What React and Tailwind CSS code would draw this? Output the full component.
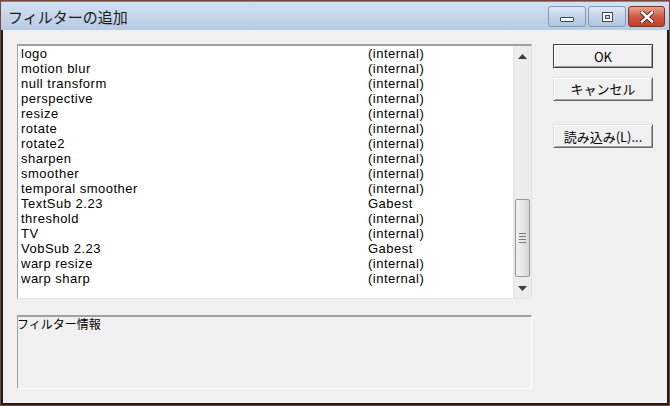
import { useState } from 'react';

const filters = [
  ['logo', '(internal)'],
  ['motion blur', '(internal)'],
  ['null transform', '(internal)'],
  ['perspective', '(internal)'],
  ['resize', '(internal)'],
  ['rotate', '(internal)'],
  ['rotate2', '(internal)'],
  ['sharpen', '(internal)'],
  ['smoother', '(internal)'],
  ['temporal smoother', '(internal)'],
  ['TextSub 2.23', 'Gabest'],
  ['threshold', '(internal)'],
  ['TV', '(internal)'],
  ['VobSub 2.23', 'Gabest'],
  ['warp resize', '(internal)'],
  ['warp sharp', '(internal)'],
];

const uiFont = "font-['Liberation_Sans','Noto_Sans_CJK_JP',sans-serif]";
const jpFont = "font-['Noto_Sans_CJK_JP',sans-serif]";

function CaptionButton({ kind }) {
  if (kind === 'close') {
    return (
      <div className="w-[37px] h-[21px] rounded-[3px] border border-[#7a3328] bg-gradient-to-b from-[#e8a493] via-[#cf5a45] to-[#c0402c] flex items-center justify-center">
        <svg width="14" height="12" viewBox="0 0 14 12">
          <path d="M2 1.5 L12 10.5 M12 1.5 L2 10.5" stroke="#4a2a24" strokeWidth="4.2" strokeLinecap="square" />
          <path d="M2 1.5 L12 10.5 M12 1.5 L2 10.5" stroke="#ffffff" strokeWidth="2.4" strokeLinecap="square" />
        </svg>
      </div>
    );
  }
  return (
    <div className="w-[38px] h-[21px] rounded-[3px] border border-[#8199b8] bg-gradient-to-b from-[#dfe8f4] via-[#c3d3e8] to-[#b3c6df] flex items-center justify-center">
      {kind === 'min' ? (
        <div className="w-[14px] h-[5px] mt-[6px] bg-white border border-[#3a4a60] rounded-[1px]" />
      ) : (
        <div className="w-[11px] h-[10px] border border-[#3a4a60] bg-white flex items-center justify-center">
          <div className="w-[5px] h-[4px] border border-[#3a4a60] bg-[#c9d6e6]" />
        </div>
      )}
    </div>
  );
}

function DialogButton({ children, primary }) {
  return (
    <button
      className={`w-[100px] h-[24px] bg-[#f0f0f0] text-[13px] text-black ${jpFont} leading-none ${
        primary
          ? 'border border-[#404040] shadow-[inset_1px_1px_0_#ffffff,inset_-1px_-1px_0_#a0a0a0]'
          : 'border border-t-[#e3e3e3] border-l-[#e3e3e3] border-r-[#696969] border-b-[#696969] shadow-[inset_1px_1px_0_#ffffff,inset_-1px_-1px_0_#a0a0a0]'
      }`}
    >
      {children}
    </button>
  );
}

function Scrollbar() {
  return (
    <div className="w-[18px] flex flex-col bg-[#ececec] border-l border-[#e4e4e4]">
      <div className="h-[20px] flex items-center justify-center">
        <svg width="9" height="5" viewBox="0 0 9 5">
          <path d="M4.5 0 L9 5 L0 5 Z" fill="#3c3c3c" />
        </svg>
      </div>
      <div className="flex-1 flex flex-col justify-end pb-[1px]">
        <div className="mx-[1px] h-[78px] rounded-[2px] border border-[#979797] bg-gradient-to-r from-[#f2f2f2] via-[#e6e6e6] to-[#d6d6d6] flex flex-col items-center justify-center gap-[2px]">
          <div className="w-[7px] h-[1px] bg-[#7a7a7a]" />
          <div className="w-[7px] h-[1px] bg-[#7a7a7a]" />
          <div className="w-[7px] h-[1px] bg-[#7a7a7a]" />
          <div className="w-[7px] h-[1px] bg-[#7a7a7a]" />
        </div>
      </div>
      <div className="h-[20px] flex items-center justify-center">
        <svg width="9" height="5" viewBox="0 0 9 5">
          <path d="M0 0 L9 0 L4.5 5 Z" fill="#3c3c3c" />
        </svg>
      </div>
    </div>
  );
}

export default function App() {
  const [selected, setSelected] = useState(null);

  return (
    <div className="w-[670px] h-[406px] bg-[#7d4536] p-[1px]">
      <div className="w-full h-full flex flex-col bg-[#1c1c1c] px-[2px] pb-[2px]">
        <div className="h-[29px] -mx-[2px] flex items-center justify-between bg-gradient-to-b from-[#d3e0f0] to-[#b7cbe3] pl-[7px] pr-[4px] border-t border-[#6f86a8]">
          <span className={`text-[15px] text-[#1b1b1b] ${jpFont} leading-none`}>フィルターの追加</span>
          <div className="flex gap-[2px] items-start self-start pt-[4px]">
            <CaptionButton kind="min" />
            <CaptionButton kind="max" />
            <CaptionButton kind="close" />
          </div>
        </div>

        <div className="flex-1 bg-[#f0f0f0] flex gap-[21px] px-[14px] pt-[14px]">
          <div className="flex flex-col w-[515px]">
            <div className="h-[255px] flex bg-white border border-t-2 border-t-[#a0a0a0] border-l-[#a0a0a0] border-r-[#e3e3e3] border-b-[#e3e3e3]">
              <div className={`flex-1 pl-[3px] text-[13px] tracking-[0.5px] text-black ${uiFont}`}>
                {filters.map(([name, author], i) => (
                  <div
                    key={name}
                    onClick={() => setSelected(i)}
                    className={`h-[15px] leading-[15px] flex ${selected === i ? 'bg-[#3399ff] text-white' : ''}`}
                  >
                    <span className="w-[347px]">{name}</span>
                    <span>{author}</span>
                  </div>
                ))}
              </div>
              <Scrollbar />
            </div>

            <div className="mt-[16px] h-[74px] border border-t-2 border-t-[#a0a0a0] border-l-[#a0a0a0] border-r-white border-b-white">
              <div className={`text-[12px] text-black ${jpFont} leading-[14px] -ml-[1px]`}>フィルター情報</div>
            </div>
          </div>

          <div className="flex flex-col">
            <DialogButton primary>OK</DialogButton>
            <div className="mt-[8px]">
              <DialogButton>キャンセル</DialogButton>
            </div>
            <div className="mt-[23px]">
              <DialogButton>読み込み(L)...</DialogButton>
            </div>
          </div>
        </div>
      </div>
    </div>
  );
}
